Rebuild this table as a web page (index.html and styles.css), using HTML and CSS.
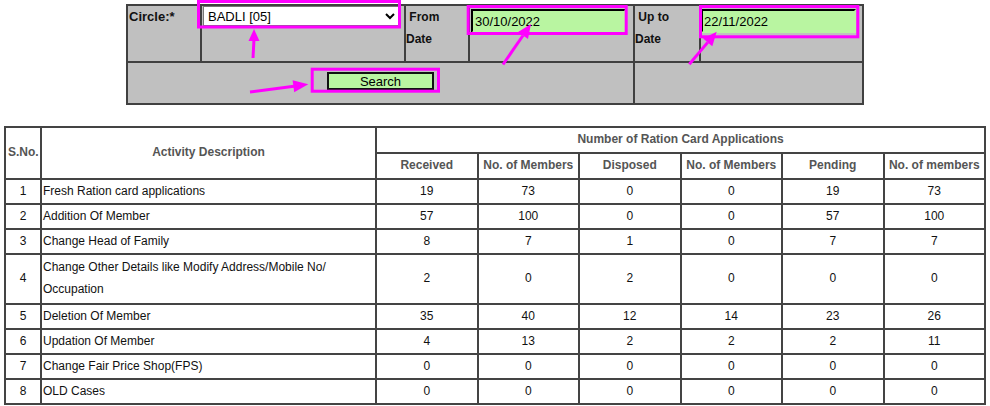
FILE: index.html
```html
<!DOCTYPE html>
<html>
<head>
<meta charset="utf-8">
<link rel="stylesheet" href="styles.css">
</head>
<body>
<div class="page">
  <table class="filter">
    <colgroup>
      <col class="c-lbl1"><col class="c-sel"><col class="c-lbl2"><col class="c-in1"><col class="c-lbl3"><col class="c-in2">
    </colgroup>
    <tr class="filter-main">
      <td class="lbl lbl-circle">Circle:*</td>
      <td class="fld fld-sel"><select class="circle-select"><option>BADLI [05]</option></select></td>
      <td class="lbl">&nbsp;From<br>Date</td>
      <td class="fld"><input class="date" type="text" value="30/10/2022"></td>
      <td class="lbl">&nbsp;Up to<br>Date</td>
      <td class="fld"><input class="date date-to" type="text" value="22/11/2022"></td>
    </tr>
    <tr class="filter-actions">
      <td colspan="4" class="act"><button class="search" type="button">Search</button></td>
      <td colspan="2"></td>
    </tr>
  </table>

  <table class="report">
    <colgroup>
      <col class="r-sno"><col class="r-desc"><col class="r-n"><col class="r-n"><col class="r-n"><col class="r-n"><col class="r-n"><col class="r-n">
    </colgroup>
    <thead>
      <tr>
        <th rowspan="2" class="th-sno">S.No.</th>
        <th rowspan="2">Activity Description</th>
        <th colspan="6">Number of Ration Card Applications</th>
      </tr>
      <tr>
        <th>Received</th><th>No. of Members</th><th>Disposed</th><th>No. of Members</th><th>Pending</th><th>No. of members</th>
      </tr>
    </thead>
    <tbody>
      <tr><td>1</td><td class="desc">Fresh Ration card applications</td><td>19</td><td>73</td><td>0</td><td>0</td><td>19</td><td>73</td></tr>
      <tr><td>2</td><td class="desc">Addition Of Member</td><td>57</td><td>100</td><td>0</td><td>0</td><td>57</td><td>100</td></tr>
      <tr><td>3</td><td class="desc">Change Head of Family</td><td>8</td><td>7</td><td>1</td><td>0</td><td>7</td><td>7</td></tr>
      <tr class="tall"><td>4</td><td class="desc">Change Other Details like Modify Address/Mobile No/ Occupation</td><td>2</td><td>0</td><td>2</td><td>0</td><td>0</td><td>0</td></tr>
      <tr><td>5</td><td class="desc">Deletion Of Member</td><td>35</td><td>40</td><td>12</td><td>14</td><td>23</td><td>26</td></tr>
      <tr><td>6</td><td class="desc">Updation Of Member</td><td>4</td><td>13</td><td>2</td><td>2</td><td>2</td><td>11</td></tr>
      <tr><td>7</td><td class="desc">Change Fair Price Shop(FPS)</td><td>0</td><td>0</td><td>0</td><td>0</td><td>0</td><td>0</td></tr>
      <tr><td>8</td><td class="desc">OLD Cases</td><td>0</td><td>0</td><td>0</td><td>0</td><td>0</td><td>0</td></tr>
    </tbody>
  </table>
</div>

<svg class="annot" width="990" height="406" viewBox="0 0 990 406" xmlns="http://www.w3.org/2000/svg">
  <g fill="none" stroke="#ff00ff" stroke-width="3">
    <rect x="198.5" y="1.5" width="201" height="25.5"/>
    <rect x="468.2" y="6.5" width="158" height="27"/>
    <rect x="700.5" y="6.5" width="157.3" height="30.3"/>
    <rect x="312.2" y="69.2" width="126.3" height="22"/>
    <line x1="253" y1="58" x2="254" y2="39"/>
    <line x1="250" y1="92" x2="294" y2="86.2"/>
    <line x1="503" y1="64.5" x2="523" y2="35.5"/>
    <line x1="689.3" y1="64.3" x2="707.7" y2="42.4"/>
  </g>
  <g fill="#ff00ff">
    <polygon points="254,29 248.5,41 259.5,41"/>
    <polygon points="308.3,84.3 294.2,92.2 292.6,80.2"/>
    <polygon points="531,24 528,38.9 518.1,32.1"/>
    <polygon points="716.7,31.7 712.3,46.3 703.1,38.5"/>
  </g>
</svg>
</body>
</html>
```
FILE: styles.css
```css
html, body {
  margin: 0;
  padding: 0;
  background: #ffffff;
}

body {
  position: relative;
  font-family: "Liberation Sans", Arial, sans-serif;
  font-size: 12px;
  color: #000;
}

.page {
  padding: 4px 4px 0 4px;
}

/* ---------- filter form ---------- */
.filter {
  margin: 0 auto;
  width: 736px;
  table-layout: fixed;
  border-collapse: collapse;
  background: #c0c0c0;
}

.c-lbl1 { width: 74px; }
.c-sel  { width: 204px; }
.c-lbl2 { width: 64px; }
.c-in1  { width: 165px; }
.c-lbl3 { width: 66px; }
.c-in2  { width: 163px; }

.filter td {
  border: 2px solid #404040;
  padding: 0;
  vertical-align: top;
}

.filter-main td { height: 55px; }
.filter-actions td { height: 31px; }

.lbl {
  font-weight: bold;
  font-size: 12px;
  line-height: 22px;
  padding-left: 1px;
  color: #111;
}

.filter td.lbl-circle {
  font-size: 13px;
  padding-left: 1px;
}

.circle-select {
  display: block;
  margin: 0 0 0 1px;
  width: 196px;
  height: 20px;
  font-family: "Liberation Sans", Arial, sans-serif;
  font-size: 13px;
  color: #000;
  background: #fff;
  border: 1px solid #767676;
  border-radius: 0;
  padding: 0;
}

.date {
  display: block;
  box-sizing: border-box;
  margin: 3px 0 0 1px;
  width: 155px;
  height: 24px;
  padding: 0 0 0 2px;
  font-family: "Liberation Sans", Arial, sans-serif;
  font-size: 13px;
  color: #000;
  background: #b9f5a1;
  border: 2px inset #555;
  border-right-color: #b9f5a1;
  border-bottom-color: #b9f5a1;
}

.date.date-to {
  margin-left: 0;
  padding-left: 1px;
}

.act {
  text-align: center;
}

.filter td.act { padding-top: 9px; }

.search {
  box-sizing: border-box;
  width: 107px;
  height: 18px;
  padding: 1px 0 0;
  font-family: "Liberation Sans", Arial, sans-serif;
  font-size: 13px;
  line-height: 14px;
  color: #000;
  background: #b9f5a1;
  border: 2px solid #111;
  border-radius: 0;
}

/* ---------- report ---------- */
.report {
  margin-top: 21px;
  width: 981px;
  table-layout: fixed;
  border-collapse: collapse;
}

.r-sno  { width: 36px; }
.r-desc { width: 335px; }
.r-n    { width: 101.5px; }

.report th,
.report td {
  border: 2px solid #444;
  line-height: 22px;
}

.report th {
  font-weight: bold;
  color: #555;
  padding: 0 1px 2px;
  text-align: center;
}

.report th.th-sno {
  text-align: left;
  padding-left: 2px;
}

.report td {
  padding: 0 1px 1px;
  text-align: center;
  color: #111;
}

.report td.desc {
  text-align: left;
  padding-left: 1px;
}

.report tr.tall td {
  padding: 1px 1px 3px;
}

/* ---------- annotations ---------- */
.annot {
  position: absolute;
  left: 0;
  top: 0;
  pointer-events: none;
}
```
